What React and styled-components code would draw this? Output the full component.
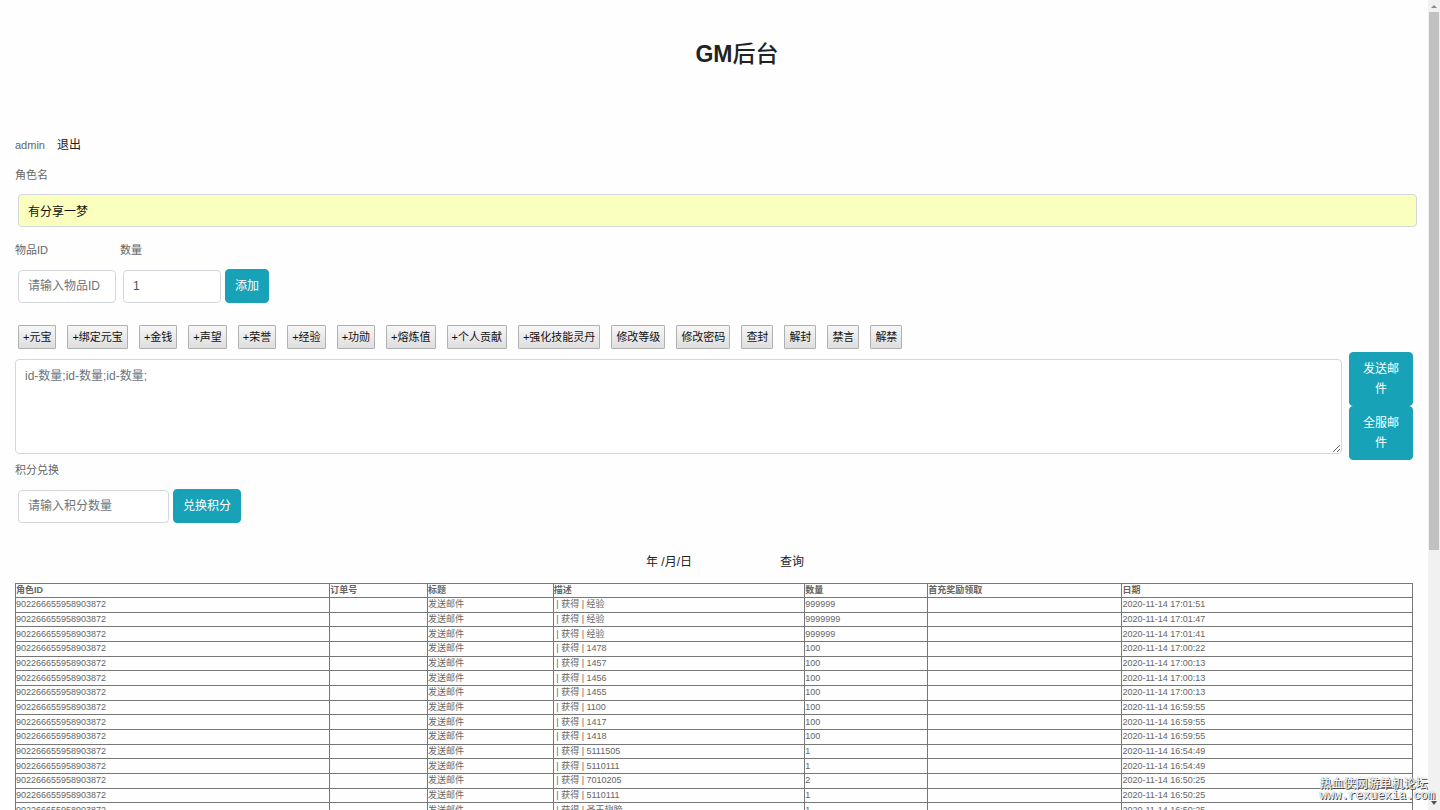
import styled, { createGlobalStyle } from "styled-components";

const actions = [
    "+元宝", "+绑定元宝", "+金钱", "+声望", "+荣誉", "+经验", "+功勋", "+熔炼值",
    "+个人贡献", "+强化技能灵丹", "修改等级", "修改密码", "查封", "解封", "禁言", "解禁",
];

const columns = [
    { title: "角色ID", width: "22.5%" },
    { title: "订单号", width: "7%" },
    { title: "标题", width: "9%" },
    { title: "描述", width: "18%" },
    { title: "数量", width: "8.8%" },
    { title: "首充奖励领取", width: "13.9%" },
    { title: "日期", width: "20.8%" },
];

const records = [
    ["经验", "999999", "2020-11-14 17:01:51"],
    ["经验", "9999999", "2020-11-14 17:01:47"],
    ["经验", "999999", "2020-11-14 17:01:41"],
    ["1478", "100", "2020-11-14 17:00:22"],
    ["1457", "100", "2020-11-14 17:00:13"],
    ["1456", "100", "2020-11-14 17:00:13"],
    ["1455", "100", "2020-11-14 17:00:13"],
    ["1100", "100", "2020-11-14 16:59:55"],
    ["1417", "100", "2020-11-14 16:59:55"],
    ["1418", "100", "2020-11-14 16:59:55"],
    ["5111505", "1", "2020-11-14 16:54:49"],
    ["5110111", "1", "2020-11-14 16:54:49"],
    ["7010205", "2", "2020-11-14 16:50:25"],
    ["5110111", "1", "2020-11-14 16:50:25"],
    ["圣王翅膀", "1", "2020-11-14 16:50:25"],
];

const App = () => {
    return (<Screen>
        <GlobalStyle />
        <Page>
            <Title>GM<span>后台</span></Title>
            <UserBar>
                <span>admin</span>
                <a href="#logout">退出</a>
            </UserBar>

            <Label htmlFor="role">角色名</Label>
            <FieldRow>
                <RoleInput id="role" defaultValue="有分享一梦" />
            </FieldRow>

            <LabelRow>
                <Label htmlFor="item">物品ID</Label>
                <Label htmlFor="count">数量</Label>
            </LabelRow>
            <FieldRow>
                <Pair>
                    <Input id="item" $width="98px" placeholder="请输入物品ID" />
                    <Input id="count" $width="98px" defaultValue="1" />
                </Pair>
                <Button>添加</Button>
            </FieldRow>

            <Toolbar>
                {actions.map((name) => <ToolButton key={name}>{name}</ToolButton>)}
            </Toolbar>

            <MailRow>
                <MailText aria-label="邮件内容" placeholder="id-数量;id-数量;id-数量;" />
                <MailButtons>
                    <Button>发送邮件</Button>
                    <Button>全服邮件</Button>
                </MailButtons>
            </MailRow>

            <Label htmlFor="points">积分兑换</Label>
            <FieldRow>
                <Input id="points" $width="151px" placeholder="请输入积分数量" />
                <Button>兑换积分</Button>
            </FieldRow>

            <Search>
                <DateInput aria-label="日期" defaultValue="年 /月/日" />
                <SearchButton>查询</SearchButton>
            </Search>

            <Table>
                <colgroup>
                    {columns.map((c) => <col key={c.title} style={{ width: c.width }} />)}
                </colgroup>
                <thead>
                    <tr>{columns.map((c) => <th key={c.title}>{c.title}</th>)}</tr>
                </thead>
                <tbody>
                    {records.map(([item, count, date], i) => (
                        <tr key={i}>
                            <td>902266655958903872</td>
                            <td></td>
                            <td>发送邮件</td>
                            <td>{"\u00a0| 获得 | " + item}</td>
                            <td>{count}</td>
                            <td></td>
                            <td>{date}</td>
                        </tr>
                    ))}
                </tbody>
            </Table>
        </Page>
        <ScrollBar aria-hidden="true">
            <Arrow viewBox="0 0 12 12"><path d="M3 8h6L6 5z" fill="#8a8a8a" /></Arrow>
            <Track><Thumb /></Track>
            <Arrow viewBox="0 0 12 12"><path d="M3 3h6L6 7z" fill="#505050" /></Arrow>
        </ScrollBar>
        <Watermark>
            <span>热血侠网游单机论坛</span>
            <Site>www.rexuexia.com</Site>
        </Watermark>
    </Screen>);
}

export default App;

const GlobalStyle = createGlobalStyle`
    * {
        box-sizing: border-box;
    }
    body {
        margin: 0;
        background: #fefefe;
        color: #666;
        font-family: "Liberation Sans", "Noto Sans CJK SC", sans-serif;
        font-size: 11px;
        line-height: 20px;
    }
    input, button, textarea {
        margin: 0;
        font-family: inherit;
        font-size: 12px;
        line-height: 20px;
    }
`

const Screen = styled.div`
    position: relative;
    display: flex;
    height: 100vh;
    overflow: hidden;
`

const Page = styled.main`
    flex: 1;
    min-width: 0;
    padding: 0 15px;
`

const Title = styled.h1`
    margin: 39px 0 66px;
    padding-left: 46px;
    color: #222;
    font-size: 23px;
    line-height: 30px;
    text-align: center;

    span {
        font-weight: 500;
    }
`

const UserBar = styled.div`
    display: flex;
    gap: 12px;
    margin-bottom: 10px;

    a {
        color: #222;
        font-size: 12px;
        text-decoration: none;
    }
`

const Label = styled.label`
    display: block;
`

const LabelRow = styled.div`
    display: grid;
    grid-template-columns: 105px auto;
    margin-top: 13px;
`

const FieldRow = styled.div`
    display: flex;
    align-items: center;
    gap: 4px;
    margin-top: 9px;
    padding-left: 3px;
`

const Pair = styled.div`
    display: flex;
    gap: 7px;
`

const Input = styled.input`
    width: ${(props) => props.$width};
    height: 33px;
    padding: 6px 9px;
    border: 1px solid #d3d7dc;
    border-radius: 4px;
    background: #fff;
    color: #495057;

    &::placeholder {
        color: #6c757d;
    }
`

const RoleInput = styled(Input)`
    flex: 1;
    min-width: 0;
    margin-right: -4px;
    background: #faffbd;
    color: #111;
`

const Button = styled.button`
    padding: 6px 9px;
    border: 1px solid #17a2b8;
    border-radius: 4px;
    background: #17a2b8;
    color: #fff;
`

const Toolbar = styled.div`
    display: flex;
    flex-wrap: wrap;
    gap: 11px;
    margin-top: 22px;
    padding-left: 3px;
`

const ToolButton = styled.button`
    height: 24px;
    padding: 0 4px;
    border: 1px solid #b0b0b0;
    border-radius: 1px;
    background: linear-gradient(#f6f6f6, #dedede);
    color: #111;
    font-size: 11px;
    white-space: nowrap;
`

const MailRow = styled.div`
    display: flex;
    align-items: center;
    gap: 7px;
    margin-top: 3px;
`

const MailText = styled.textarea`
    flex: 1;
    height: 95px;
    padding: 6px 9px;
    border: 1px solid #d3d7dc;
    border-radius: 4px;
    background: #fff;
    resize: vertical;

    &::placeholder {
        color: #6c757d;
    }
`

const MailButtons = styled.div`
    display: flex;
    flex-direction: column;
    width: 64px;
`

const Search = styled.div`
    display: flex;
    justify-content: center;
    align-items: center;
    gap: 24px;
    margin: 29px 0 11px;
    padding-left: 22px;
`

const DateInput = styled.input`
    width: 110px;
    padding: 0;
    border: 0;
    background: transparent;
    color: #222;
`

const SearchButton = styled.button`
    padding: 0;
    border: 0;
    background: transparent;
    color: #222;
`

const Table = styled.table`
    width: 100%;
    height: 235px;
    border: 1px solid #555;
    border-collapse: collapse;
    table-layout: fixed;
    font-size: 9px;
    line-height: 13px;

    th, td {
        padding: 0;
        border: 1px solid #777;
        text-align: left;
        white-space: nowrap;
        overflow: hidden;
    }
`

const ScrollBar = styled.div`
    display: flex;
    flex-direction: column;
    width: 12px;
    background: #f1f1f1;
`

const Arrow = styled.svg`
    width: 12px;
    height: 12px;
`

const Track = styled.div`
    flex: 1;
    padding: 0 1px;
`

const Thumb = styled.div`
    height: 68.4%;
    background: #c1c1c1;
`

const Watermark = styled.div`
    position: absolute;
    right: 5px;
    bottom: 8px;
    display: flex;
    flex-direction: column;
    color: #fff;
    font-size: 12px;
    line-height: 12px;
    text-shadow: 1px 1px 0 #444, 0 0 1px #555;
`

const Site = styled.span`
    font-family: "Liberation Mono", monospace;
`
